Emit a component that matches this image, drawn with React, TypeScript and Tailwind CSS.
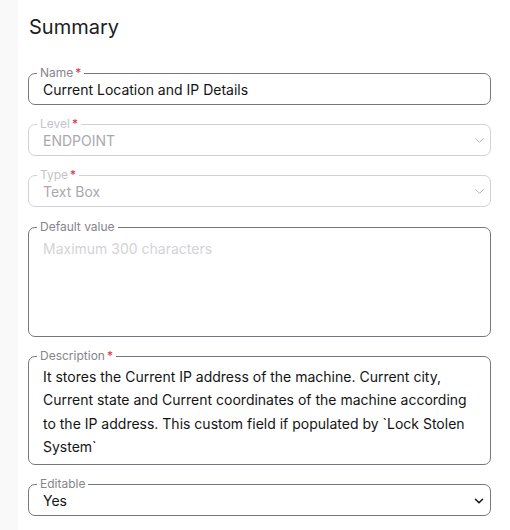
import React from 'react';
import { ChevronDown } from 'lucide-react';

interface FieldProps {
    label: string;
    required?: boolean;
    disabled?: boolean;
    className?: string;
    children: React.ReactNode;
}

const Field: React.FC<FieldProps> = ({ label, required = false, disabled = false, className = '', children }) => (
    <fieldset
        className={`rounded-[7px] border px-[14px] ${disabled ? 'border-[#d2d2d6]' : 'border-[#77777f]'} ${className}`}
    >
        <legend
            className={`ml-[-6px] px-[3px] text-[12px] leading-[14px] ${disabled ? 'text-[#c4c4c8]' : 'text-[#85858c]'}`}
        >
            {label}
            {required && <span className="ml-[2px] text-[#e0283c]">*</span>}
        </legend>
        {children}
    </fieldset>
);

export default function App() {
    return (
        <div className="flex h-[530px] w-[510px] bg-white font-['Inter',sans-serif]">
            {/* left gutter */}
            <div className="w-[18px] shrink-0 bg-[#f9f9f9]" />

            <div className="flex flex-1 flex-col pl-[10px] pr-[19px]">
                <h1 className="mt-[15px] pl-[1px] text-[20px] leading-[24px] text-[#1c1c1e]">Summary</h1>

                <div className="mt-[27px] flex flex-col gap-[12px]">
                    <Field label="Name" required>
                        <div className="pb-[5px] text-[14px] leading-[19px] text-[#141414]">
                            Current Location and IP Details
                        </div>
                    </Field>

                    <Field label="Level" required disabled>
                        <div className="flex items-center justify-between pb-[5px] text-[14px] leading-[19px] text-[#a9a9ad]">
                            <span>ENDPOINT</span>
                            <ChevronDown size={15} strokeWidth={1.6} className="mr-[-11px] text-[#b4b4b8]" />
                        </div>
                    </Field>

                    <Field label="Type" required disabled>
                        <div className="flex items-center justify-between pb-[5px] text-[14px] leading-[19px] text-[#a9a9ad]">
                            <span>Text Box</span>
                            <ChevronDown size={15} strokeWidth={1.6} className="mr-[-11px] text-[#b4b4b8]" />
                        </div>
                    </Field>

                    <Field label="Default value" className="mt-[1px] h-[117px]">
                        <div className="pt-[5px] text-[14px] leading-[19px] text-[#d3d3d7]">
                            Maximum 300 characters
                        </div>
                    </Field>

                    <Field label="Description" required className="h-[116px]">
                        <p className="mt-[2px] text-[14px] leading-[23.3px] text-[#141414]">
                            It stores the Current IP address of the machine. Current city, Current state and Current
                            coordinates of the machine according to the IP address. This custom field if populated by
                            `Lock Stolen System`
                        </p>
                    </Field>

                    <Field label="Editable">
                        <div className="flex items-center justify-between pb-[5px] text-[14px] leading-[19px] text-[#141414]">
                            <span>Yes</span>
                            <ChevronDown size={14} strokeWidth={2.75} className="mr-[-10px] text-[#1c1c1e]" />
                        </div>
                    </Field>
                </div>
            </div>
        </div>
    );
}
